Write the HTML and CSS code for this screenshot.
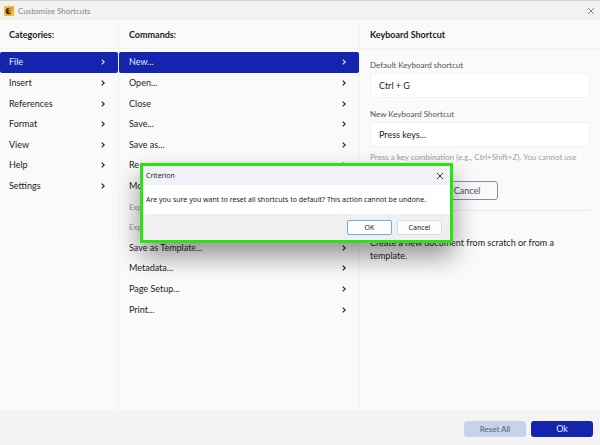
FILE: index.html
```html
<!DOCTYPE html>
<html lang="en">
<head>
<meta charset="utf-8">
<title>Customize Shortcuts</title>
<link rel="stylesheet" href="styles.css">
</head>
<body>
<svg class="defs" aria-hidden="true">
  <symbol id="chevron" viewBox="0 0 6 6"><path d="M1.700 .6 4.200 3 1.700 5.400" fill="none" stroke="currentColor" stroke-width="1.100"/></symbol>
  <symbol id="cross" viewBox="0 0 8 8"><path d="M1 1 7 7M7 1 1 7" fill="none" stroke="currentColor" stroke-width="1"/></symbol>
</svg>
<div class="window">
  <header class="titlebar">
    <svg class="logo" viewBox="0 0 20 20" aria-hidden="true">
      <rect width="20" height="20" rx="2" fill="#f7b733"/>
      <path d="M9.500 3.500C4.500 4 2.500 7.500 3.500 12C4.500 16.500 9 18 14 15.500L13 12.800C10.500 14 8.500 13.700 8 12L12.500 10.500 11.500 8.500 7.500 9.500C7.500 7.500 8.500 6.500 10.500 6.300Z" fill="#3b2c16"/>
      <path d="M12 5h2v2h-2zM15 3h2v2h-2zM15 8h1.500v1.500H15z" fill="#6b4d1c"/>
    </svg>
    <span class="title">Customize Shortcuts</span>
    <button class="close" aria-label="Close window"><svg><use href="#cross"/></svg></button>
  </header>
  <main class="columns">
    <section class="column">
      <h2>Categories:</h2>
      <nav class="list">
        <button class="row selected">File<svg><use href="#chevron"/></svg></button>
        <button class="row">Insert<svg><use href="#chevron"/></svg></button>
        <button class="row">References<svg><use href="#chevron"/></svg></button>
        <button class="row">Format<svg><use href="#chevron"/></svg></button>
        <button class="row">View<svg><use href="#chevron"/></svg></button>
        <button class="row">Help<svg><use href="#chevron"/></svg></button>
        <button class="row">Settings<svg><use href="#chevron"/></svg></button>
      </nav>
    </section>
    <section class="column commands">
      <h2>Commands:</h2>
      <nav class="list">
        <button class="row selected">New...<svg><use href="#chevron"/></svg></button>
        <button class="row">Open...<svg><use href="#chevron"/></svg></button>
        <button class="row">Close<svg><use href="#chevron"/></svg></button>
        <button class="row">Save...<svg><use href="#chevron"/></svg></button>
        <button class="row">Save as...<svg><use href="#chevron"/></svg></button>
        <button class="row">Re<svg><use href="#chevron"/></svg></button>
        <button class="row">Mo<svg><use href="#chevron"/></svg></button>
        <button class="row group">Exp</button>
        <button class="row group">Exp</button>
        <button class="row">Save as Template...<svg><use href="#chevron"/></svg></button>
        <button class="row">Metadata...<svg><use href="#chevron"/></svg></button>
        <button class="row">Page Setup...<svg><use href="#chevron"/></svg></button>
        <button class="row">Print...<svg><use href="#chevron"/></svg></button>
      </nav>
    </section>
    <section class="column">
      <h2>Keyboard Shortcut</h2>
      <form class="details">
        <label for="current">Default Keyboard shortcut</label>
        <input id="current" type="text" value="Ctrl + G" readonly>
        <label for="new">New Keyboard Shortcut</label>
        <input id="new" type="text" value="Press keys...">
        <p class="hint">Press a key combination (e.g., Ctrl+Shift+Z). You cannot use</p>
        <div class="actions"><button type="button" class="outline">Cancel</button></div>
        <p class="description">Create a new document from scratch or from a template.</p>
      </form>
    </section>
  </main>
  <footer class="footer">
    <button class="action reset">Reset All</button>
    <button class="action">Ok</button>
  </footer>
  <div class="dialog" role="dialog" aria-labelledby="dialog-title">
    <div class="dialog-head">
      <span id="dialog-title">Criterion</span>
      <button class="close" aria-label="Close dialog"><svg><use href="#cross"/></svg></button>
    </div>
    <p class="message">Are you sure you want to reset all shortcuts to default? This action cannot be undone.</p>
    <div class="dialog-foot">
      <button class="choice primary">OK</button>
      <button class="choice">Cancel</button>
    </div>
  </div>
</div>
</body>
</html>
```
FILE: styles.css
```css
* { box-sizing: border-box; }
body {
  margin: 0;
  font: 9px/12px Lato, "Open Sans", sans-serif;
  color: #1c1c1c;
}
h2, p { margin: 0; }
button, input { font: inherit; color: inherit; }
button { padding: 0; border: 0; background: none; }
.defs { position: absolute; width: 0; height: 0; }

.window {
  position: relative;
  display: flex;
  flex-direction: column;
  min-height: 100vh;
  background: #fafafa;
}
.titlebar {
  display: flex;
  align-items: center;
  gap: 4px;
  height: 20px;
  padding: 0 5px 0 4px;
  border-top: 1px solid #d0d0d0;
  background: #f2f2f2;
  color: #858585;
  font-size: 8px;
}
.logo { width: 10px; height: 10px; }
.close { display: flex; margin-left: auto; color: #858585; }
.close svg { width: 8px; height: 8px; }

.columns {
  flex: 1;
  display: grid;
  grid-template-columns: 119fr 241fr 240fr;
}
.column { border-right: 1px solid #f2f2f2; }
.column:last-child { border-right: 0; }
h2 {
  height: 29px;
  padding: 0 10px;
  border-bottom: 1px solid #f2f2f2;
  font-size: 9px;
  line-height: 30px;
  font-weight: 700;
}
.column:first-child h2, .column:first-child .row { padding-left: 9px; }
.list {
  display: grid;
  grid-template-rows: repeat(13, 1fr);
  min-height: 268px;
  margin-top: 3px;
}
.row {
  display: flex;
  align-items: center;
  justify-content: space-between;
  padding: 0 12px 0 10px;
  border-radius: 2px;
  text-align: left;
}
.row svg { width: 6px; height: 6px; }
.selected { background: #1424ad; color: #e6e8fa; }
.group { color: #929292; font-size: 8px; }

.details {
  display: flex;
  flex-direction: column;
  padding: 10px;
}
.details label { color: #555; font-size: 8px; }
.details input {
  width: 100%;
  height: 25px;
  margin: 2px 0 10px;
  padding: 0 8px;
  border: 1px solid #f2f2f2;
  border-radius: 2px;
  background: #fff;
}
.details .hint { color: #a0a0a0; font-size: 8px; margin-top: -6px; }
.actions {
  padding: 18px 92px 10px 0;
  border-bottom: 1px solid #eaeaea;
  text-align: right;
}
.outline {
  width: 62px;
  height: 19px;
  border: 1px solid #8292a5;
  border-radius: 3px;
  color: #45556b;
}
.description { margin-top: 25px; padding-right: 20px; line-height: 13px; }

.footer {
  display: flex;
  justify-content: flex-end;
  gap: 5px;
  height: 35px;
  padding: 11px 7px 8px;
  background: #f4f4f4;
}
.action {
  width: 62px;
  border-radius: 3px;
  background: #1424ad;
  color: #e6e8fa;
}
.reset { background: #c4d4e9; color: #52617a; font-size: 8px; }

.dialog {
  position: absolute;
  top: 163px;
  left: 140px;
  width: 313px;
  border: 3px solid #2ae50d;
  background: #f0f0f0;
  box-shadow: 0 13px 24px rgba(0, 0, 0, .42);
  font-family: "Noto Sans", "Open Sans", sans-serif;
  font-size: 7px;
}
.dialog-head {
  display: flex;
  align-items: center;
  height: 19px;
  padding: 0 6px 0 3px;
  background: #f0f2f7;
}
.dialog-head .close { color: #404040; }
.message {
  padding: 9px 3px 8px;
  background: #fff;
  white-space: nowrap;
}
.dialog-foot {
  display: flex;
  justify-content: flex-end;
  gap: 5px;
  height: 26px;
  padding: 6px 8px 5px 0;
}
.choice {
  width: 45px;
  border: 1px solid #dcdcdc;
  border-radius: 2px;
  background: #fdfdfd;
}
.primary { border-color: #6caee5; }
```
